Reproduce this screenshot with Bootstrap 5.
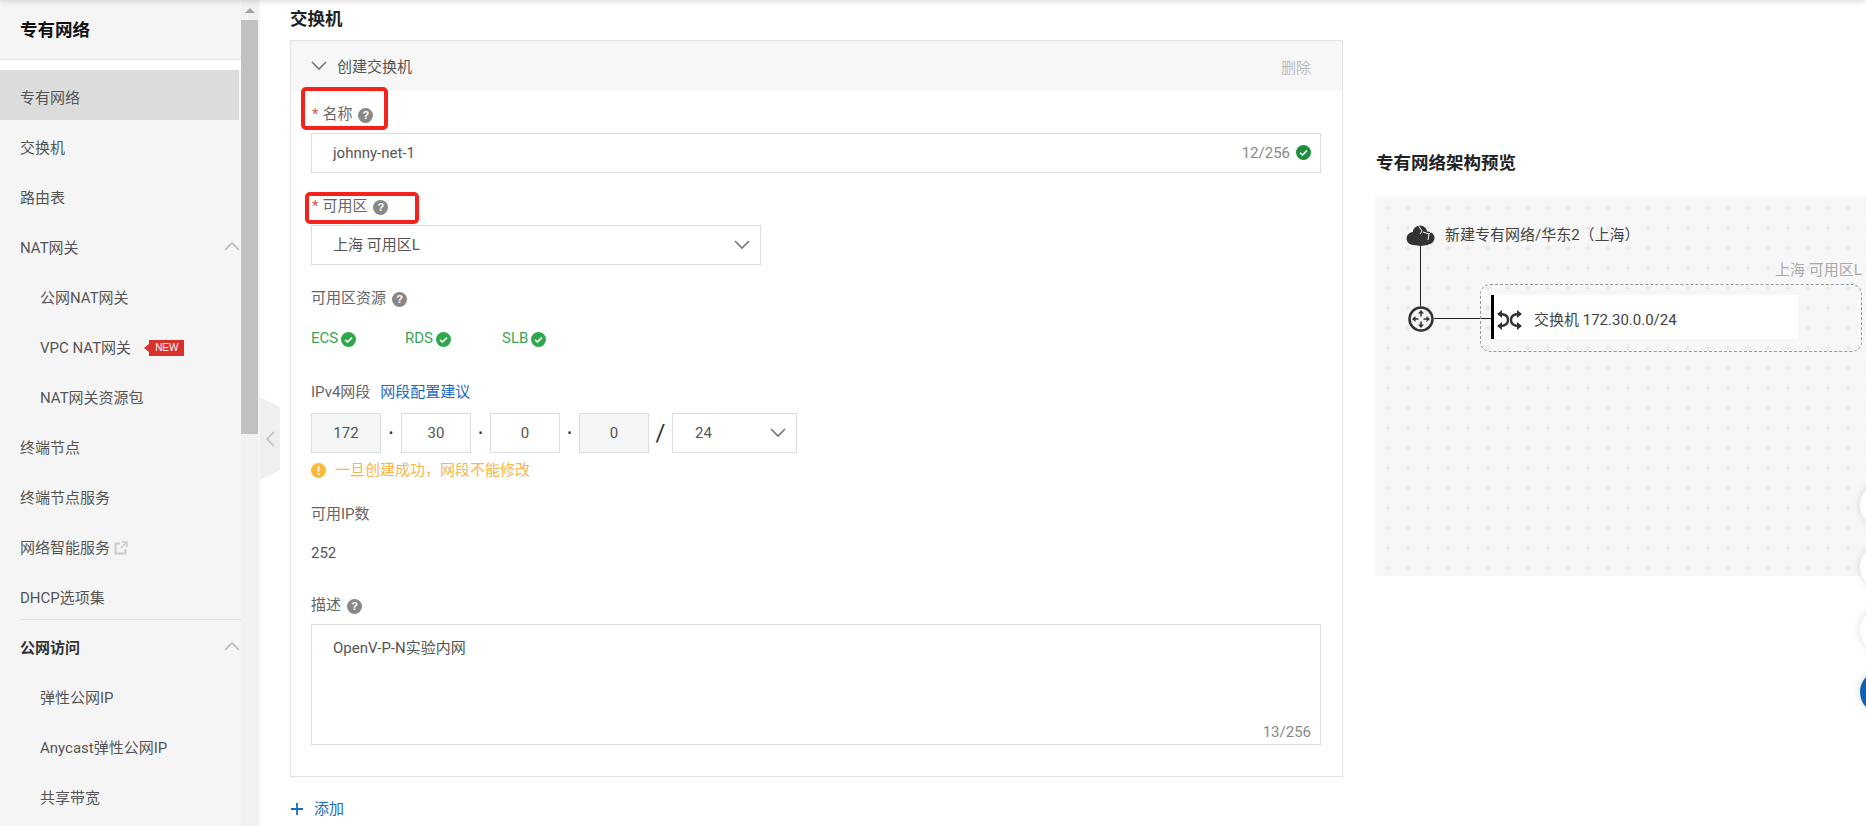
<!DOCTYPE html>
<html lang="en">
<head>
    <meta charset="UTF-8">
    <meta name="viewport" content="width=device-width, initial-scale=1.0">
    <title>创建交换机</title>
    <link href="https://cdn.jsdelivr.net/npm/bootstrap@5.3.0/dist/css/bootstrap.min.css" rel="stylesheet">
    <style>
        html, body { height: 826px; overflow: hidden; }
        body { font-family: Roboto, "Noto Sans CJK SC", sans-serif; font-size: 15px; line-height: 20px; color: #555; background: #fff; position: relative; }
        .top-shadow { position: absolute; left: 0; right: 0; top: -4px; height: 4px; box-shadow: 0 0 6px rgba(0,0,0,.25); z-index: 5; }

        /* sidebar */
        .side { width: 260px; height: 826px; background: #f5f5f6; flex: none; overflow: hidden; }
        .side-nav { width: 241px; flex: none; }
        .side-head { height: 60px; padding: 20px 20px 0; font-size: 17.5px; font-weight: 700; color: #111; border-bottom: 1px solid #e6e6e6; }
        .side-gap { height: 10px; background: #fff; }
        .side-item { height: 50px; padding: 6px 0 0 20px; display: flex; align-items: center; color: #555; }
        .side-item.is-on { background: #dcdcdc; width: 239px; }
        .side-item.is-sub { padding-left: 40px; }
        .side-item.is-bold { font-weight: 700; color: #333; }
        .side-line { height: 1px; background: #e0e0e4; margin: -1px 0 0 20px; position: relative; }
        .side-arrow { margin-left: auto; margin-right: 1px; margin-top: -5px; }
        .new-tag { position: relative; margin-left: 18px; background: #d9302c; color: #fff; font: 10px/16px "Liberation Sans", sans-serif; padding: 0 6px; height: 16px; }
        .new-tag::before { content: ""; position: absolute; left: -5px; top: 4px; border: 4px solid transparent; border-left: 0; border-right: 5px solid #d9302c; }
        .scroll-track { width: 17px; flex: none; background: #f1f1f1; position: relative; height: 826px; }
        .scroll-up { height: 20px; position: relative; }
        .scroll-up::before { content: ""; position: absolute; left: 4px; top: 8px; border: 5px solid transparent; border-top: 0; border-bottom: 5px solid #a3a3a3; }
        .scroll-thumb { height: 414px; background: #c1c1c1; }
        .fold-tab { position: absolute; left: 260px; top: 397px; width: 20px; height: 83px; background: #efefef; clip-path: polygon(0 0, 100% 10px, 100% 73px, 0 100%); display: flex; align-items: center; justify-content: center; }

        /* form column */
        .main-col { width: 1053px; margin-left: 30px; flex: none; }
        .page-title { font-size: 17.5px; font-weight: 700; color: #222; padding-top: 9px; margin-bottom: 11px; }
        .panel-box { border: 1px solid #e3e3e3; }
        .panel-head { height: 50px; background: #f7f7f7; padding: 0 31px 0 20px; }
        .panel-head .name { margin-left: 10px; padding-top: 2px; }
        .panel-head .del { margin-left: auto; color: #bbb; padding-top: 4px; }
        .panel-body-in { padding: 13px 21px 31px 20px; }
        .fld-label { position: relative; height: 20px; display: flex; align-items: center; color: #666; white-space: nowrap; }
        .req { color: #d9534f; margin: 0 4px 0 1px; }
        .hint { width: 15px; height: 15px; border-radius: 50%; background: #888; color: #fff; font: 700 11px/15px "Liberation Sans", sans-serif; text-align: center; margin-left: 6px; margin-top: 2px; flex: none; }
        .mark-box { position: absolute; border: 4px solid #f5221b; border-radius: 5px; pointer-events: none; }
        .mark-a { left: -10px; top: -17px; width: 87px; height: 43px; }
        .mark-b { left: -6px; top: -4px; width: 114px; height: 32px; }
        .ctl.form-control, .ctl.form-select { border-radius: 0; border-color: #ddd; color: #555; font-size: 15px; line-height: 20px; height: 40px; box-shadow: none; }
        .ctl-wrap { position: relative; }
        .ctl-text { padding-left: 21px; }
        .chev-select { background-image: url("data:image/svg+xml,%3Csvg xmlns='http://www.w3.org/2000/svg' width='16' height='10'%3E%3Cpath d='M1 1l7 7 7-7' fill='none' stroke='%23777' stroke-width='1.6'/%3E%3C/svg%3E"); background-size: 16px 10px; background-position: right 10px center; }
        .sel-zone { width: 450px; padding-left: 21px; }
        .counter { position: absolute; right: 31px; top: 10px; color: #888; }
        .counter-ok { position: absolute; right: 10px; top: 12px; }
        .counter-b { right: 10px; top: auto; bottom: 3px; }
        .mt-zone { margin-top: 23px; }
        .lbl-gap { margin-top: 9px; }
        .res-row { margin-top: 20px; height: 20px; color: #3aa655; }
        .res-item { width: 94px; display: flex; align-items: center; gap: 3px; }
        .res-item svg { margin-top: 2px; }
        .res-item.is-wide { width: 97px; }
        .mt-ip { margin-top: 34px; }
        .ip-link { color: #1b6cc0; text-decoration: none; margin-left: 10px; }
        .ip-row { margin-top: 11px; display: flex; align-items: center; }
        .ip-part.form-control { width: 70px; text-align: center; flex: none; padding: 0; }
        .ip-part.is-gray { background: #f4f5f5; }
        .ip-dot { width: 19px; text-align: center; color: #333; flex: none; font-size: 12px; }
        .ip-dot.first { width: 20px; }
        .ip-slash { width: 23px; text-align: center; color: #333; font-size: 24px; flex: none; }
        .ip-mask { width: 125px; flex: none; padding-left: 22px; }
        .warn-row { margin-top: 7px; height: 20px; color: #f6b64e; display: flex; align-items: center; gap: 9px; }
        .mt-count { margin-top: 24px; }
        .val-line { margin-top: 19px; height: 20px; color: #555; }
        .mt-desc { margin-top: 32px; }
        .desc-box.form-control { height: 121px; border-radius: 0; border-color: #ddd; color: #555; font-size: 15px; line-height: 20px; padding: 13px 21px; resize: none; box-shadow: none; }
        .add-row { margin-top: 22px; color: #1b6cc0; display: flex; align-items: center; gap: 10px; }

        /* preview column */
        .view-col { flex: 1 1 auto; margin-left: 32px; padding-top: 153px; min-width: 0; }
        .view-title { font-size: 17.5px; font-weight: 700; color: #222; margin-bottom: 23px; padding-left: 1px; }
        .canvas-box { position: relative; height: 380px; background-color: #f7f7f7; background-image: url("data:image/svg+xml,%3Csvg xmlns='http://www.w3.org/2000/svg' width='20' height='20'%3E%3Cpath d='M5 10h6M8 7v6' stroke='%23e3e3e3' stroke-width='1'/%3E%3C/svg%3E"); background-position: 5px 2px; }
        .node { position: absolute; }
        .cloud-ico { left: 31px; top: 29px; }
        .router-ico { left: 33px; top: 110px; }
        .vpc-name { left: 70px; top: 29px; color: #444; white-space: nowrap; }
        .zone-name { left: 400px; top: 64px; color: #aaa; white-space: nowrap; }
        .zone-box { left: 105px; top: 88px; width: 382px; height: 68px; border: 1px dashed #999; border-radius: 10px; }
        .sw-box { left: 116px; top: 99px; width: 307px; height: 44px; background: #fff; border-left: 3px solid #000; display: flex; align-items: center; padding: 6px 0 0 3px; gap: 12px; color: #444; white-space: nowrap; }
        .wire-v { left: 45px; top: 46px; width: 1px; height: 64px; background: #222; }
        .wire-h { left: 59px; top: 122px; width: 58px; height: 1px; background: #222; }
        .float-dot { position: absolute; left: 1860px; width: 44px; height: 44px; border-radius: 50%; background: #fff; box-shadow: 0 0 8px rgba(0,0,0,.14); z-index: 4; }
        .float-dot.d1 { top: 483px; }
        .float-dot.d2 { top: 545px; }
        .float-dot.d3 { top: 608px; }
        .float-dot.d4 { top: 670px; background: #0f62b5; }
    </style>
</head>
<body>
    <div class="top-shadow"></div>

    <div class="d-flex">
        <!-- left menu -->
        <aside class="side d-flex">
            <div class="side-nav">
                <div class="side-head">专有网络</div>
                <div class="side-gap"></div>
                <div class="side-item is-on">专有网络</div>
                <div class="side-item">交换机</div>
                <div class="side-item">路由表</div>
                <div class="side-item">NAT网关
                    <svg class="side-arrow" width="16" height="10" viewBox="0 0 16 10"><path d="M1 9l7-7 7 7" fill="none" stroke="#bbb" stroke-width="1.6"/></svg>
                </div>
                <div class="side-item is-sub">公网NAT网关</div>
                <div class="side-item is-sub">VPC NAT网关<span class="new-tag">NEW</span></div>
                <div class="side-item is-sub">NAT网关资源包</div>
                <div class="side-item">终端节点</div>
                <div class="side-item">终端节点服务</div>
                <div class="side-item">网络智能服务
                    <svg class="ms-1" width="14" height="14" viewBox="0 0 14 14"><path d="M11.5 8v4.5h-10v-10H6" fill="none" stroke="#ccc" stroke-width="2"/><path d="M8 1h5v5M13 1L7 7" fill="none" stroke="#ccc" stroke-width="1.6"/></svg>
                </div>
                <div class="side-item">DHCP选项集</div>
                <div class="side-line"></div>
                <div class="side-item is-bold">公网访问
                    <svg class="side-arrow" width="16" height="10" viewBox="0 0 16 10"><path d="M1 9l7-7 7 7" fill="none" stroke="#bbb" stroke-width="1.6"/></svg>
                </div>
                <div class="side-item is-sub">弹性公网IP</div>
                <div class="side-item is-sub">Anycast弹性公网IP</div>
                <div class="side-item is-sub">共享带宽</div>
            </div>
            <div class="scroll-track">
                <div class="scroll-up"></div>
                <div class="scroll-thumb"></div>
            </div>
        </aside>

        <!-- form -->
        <main class="main-col">
            <div class="page-title">交换机</div>
            <div class="panel-box">
                <div class="panel-head d-flex align-items-center">
                    <svg width="16" height="10" viewBox="0 0 16 10"><path d="M1 1l7 7 7-7" fill="none" stroke="#777" stroke-width="1.6"/></svg>
                    <span class="name">创建交换机</span>
                    <span class="del">删除</span>
                </div>
                <div class="panel-body-in">
                    <div class="fld-label"><span class="req">*</span>名称<span class="hint">?</span><span class="mark-box mark-a"></span></div>
                    <div class="ctl-wrap lbl-gap">
                        <input class="form-control ctl ctl-text" type="text" value="johnny-net-1">
                        <span class="counter">12/256</span>
                        <svg class="counter-ok" width="15" height="15" viewBox="0 0 14 14"><circle cx="7" cy="7" r="7" fill="#1e8e3e"/><path d="M3.8 7.2l2.2 2.2 4.2-4.2" fill="none" stroke="#fff" stroke-width="1.5"/></svg>
                    </div>

                    <div class="fld-label mt-zone"><span class="req">*</span>可用区<span class="hint">?</span><span class="mark-box mark-b"></span></div>
                    <div class="ctl-wrap lbl-gap">
                        <select class="form-select ctl chev-select sel-zone"><option>上海 可用区L</option></select>
                    </div>

                    <div class="fld-label mt-zone">可用区资源<span class="hint">?</span></div>
                    <div class="res-row d-flex">
                        <div class="res-item">ECS
                            <svg width="15" height="15" viewBox="0 0 14 14"><circle cx="7" cy="7" r="7" fill="#2ea84a"/><path d="M3.8 7.2l2.2 2.2 4.2-4.2" fill="none" stroke="#fff" stroke-width="1.5"/></svg>
                        </div>
                        <div class="res-item is-wide">RDS
                            <svg width="15" height="15" viewBox="0 0 14 14"><circle cx="7" cy="7" r="7" fill="#2ea84a"/><path d="M3.8 7.2l2.2 2.2 4.2-4.2" fill="none" stroke="#fff" stroke-width="1.5"/></svg>
                        </div>
                        <div class="res-item">SLB
                            <svg width="15" height="15" viewBox="0 0 14 14"><circle cx="7" cy="7" r="7" fill="#2ea84a"/><path d="M3.8 7.2l2.2 2.2 4.2-4.2" fill="none" stroke="#fff" stroke-width="1.5"/></svg>
                        </div>
                    </div>

                    <div class="fld-label mt-ip">IPv4网段<a class="ip-link" href="#">网段配置建议</a></div>
                    <div class="ip-row">
                        <input class="form-control ctl ip-part is-gray" type="text" value="172" readonly>
                        <span class="ip-dot first">•</span>
                        <input class="form-control ctl ip-part" type="text" value="30">
                        <span class="ip-dot">•</span>
                        <input class="form-control ctl ip-part" type="text" value="0">
                        <span class="ip-dot">•</span>
                        <input class="form-control ctl ip-part is-gray" type="text" value="0" readonly>
                        <span class="ip-slash">/</span>
                        <select class="form-select ctl chev-select ip-mask"><option>24</option></select>
                    </div>
                    <div class="warn-row">
                        <svg width="15" height="15" viewBox="0 0 14 14"><circle cx="7" cy="7" r="7" fill="#ffb838"/><path d="M7 3v5M7 9.6v1.6" stroke="#fff" stroke-width="1.7"/></svg>
                        <span>一旦创建成功，网段不能修改</span>
                    </div>

                    <div class="fld-label mt-count">可用IP数</div>
                    <div class="val-line">252</div>

                    <div class="fld-label mt-desc">描述<span class="hint">?</span></div>
                    <div class="ctl-wrap lbl-gap">
                        <textarea class="form-control desc-box">OpenV-P-N实验内网</textarea>
                        <span class="counter counter-b">13/256</span>
                    </div>
                </div>
            </div>
            <div class="add-row">
                <svg width="14" height="14" viewBox="0 0 14 14"><path d="M7 1v12M1 7h12" stroke="#1b6cc0" stroke-width="1.8"/></svg>
                <span>添加</span>
            </div>
        </main>

        <!-- preview -->
        <section class="view-col">
            <div class="view-title">专有网络架构预览</div>
            <div class="canvas-box">
                <div class="node wire-v"></div>
                <div class="node wire-h"></div>
                <svg class="node cloud-ico" width="29" height="21" viewBox="0 0 29 21">
                    <circle cx="7" cy="13.500" r="6.500" fill="#333"/><circle cx="14" cy="8" r="7.500" fill="#333"/><circle cx="22" cy="13" r="6.500" fill="#333"/><path d="M7 20h15l-7 1z" fill="#333"/><rect x="7" y="12" width="15" height="8" fill="#333"/>
                    <path d="M12 0l4 6-2 3M17 7l6 2 3-3M23 9l-1 6" fill="none" stroke="#f7f7f7" stroke-width="1"/>
                </svg>
                <div class="node vpc-name">新建专有网络/华东2（上海）</div>
                <div class="node zone-name">上海 可用区L</div>
                <div class="node zone-box"></div>
                <svg class="node router-ico" width="26" height="26" viewBox="0 0 26 26"><circle cx="13" cy="13" r="11.500" fill="#f7f7f7" stroke="#333" stroke-width="2.500"/><path d="M13 4l3 3.500h-6zM13 22l3-3.500h-6zM4 13l3.500-3v6zM22 13l-3.500-3v6z" fill="#333"/><path d="M13 7v3.500M13 15.500V19M7 13h3.500M15.500 13H19" stroke="#333" stroke-width="1.600"/></svg>
                <div class="node sw-box">
                    <svg width="25" height="20" viewBox="0 0 25 20"><path d="M3 4c6 0 8 3 8 6s-2 6-8 6M22 4c-6 0-8 3-8 6s2 6 8 6" fill="none" stroke="#333" stroke-width="2.400"/><path d="M20 0l5 4-5 4zM20 12l5 4-5 4zM5 0L0 4l5 4zM5 12L0 16l5 4z" fill="#333"/></svg>
                    <span>交换机 172.30.0.0/24</span>
                </div>
            </div>
        </section>
    </div>

    <div class="fold-tab">
        <svg width="10" height="16" viewBox="0 0 10 16"><path d="M9 1L2 8l7 7" fill="none" stroke="#c6c6c6" stroke-width="1.800"/></svg>
    </div>

    <div class="float-dot d1"></div>
    <div class="float-dot d2"></div>
    <div class="float-dot d3"></div>
    <div class="float-dot d4"></div>

    <script src="https://cdn.jsdelivr.net/npm/bootstrap@5.3.0/dist/js/bootstrap.bundle.min.js"></script>
</body>
</html>
